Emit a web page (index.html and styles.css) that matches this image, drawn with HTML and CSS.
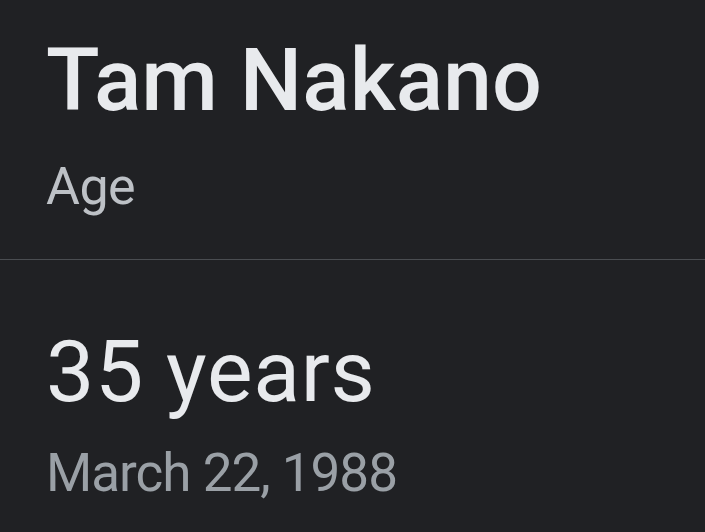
FILE: index.html
```html
<!DOCTYPE html>
<html>
<head>
<meta charset="utf-8">
<link rel="stylesheet" href="styles.css">
</head>
<body>
<div class="card">
  <section class="header">
    <h1 class="name">Tam Nakano</h1>
    <div class="label">Age</div>
  </section>
  <section class="body">
    <div class="value">35 years</div>
    <div class="date">March 22, 1988</div>
  </section>
</div>
</body>
</html>
```

FILE: styles.css
```css
html, body {
  margin: 0;
  padding: 0;
  background: #202124;
  height: 100%;
}
.card {
  font-family: Roboto, "Liberation Sans", sans-serif;
  width: 705px;
  height: 532px;
  overflow: hidden;
}
.header {
  padding: 36px 0 46px 46px;
  border-bottom: 1px solid #4a4d51;
}
.name {
  margin: 0;
  font-size: 88px;
  line-height: 88px;
  font-weight: 500;
  color: #e8eaed;
}
.label {
  margin-top: 37px;
  font-size: 52px;
  line-height: 52px;
  letter-spacing: -0.5px;
  color: #bdc1c6;
}
.body {
  padding: 69px 0 0 46px;
}
.value {
  font-size: 86px;
  line-height: 86px;
  letter-spacing: 0.7px;
  color: #e8eaed;
}
.date {
  margin-top: 32px;
  font-size: 53px;
  line-height: 53px;
  letter-spacing: -1px;
  color: #9aa0a6;
}
```
